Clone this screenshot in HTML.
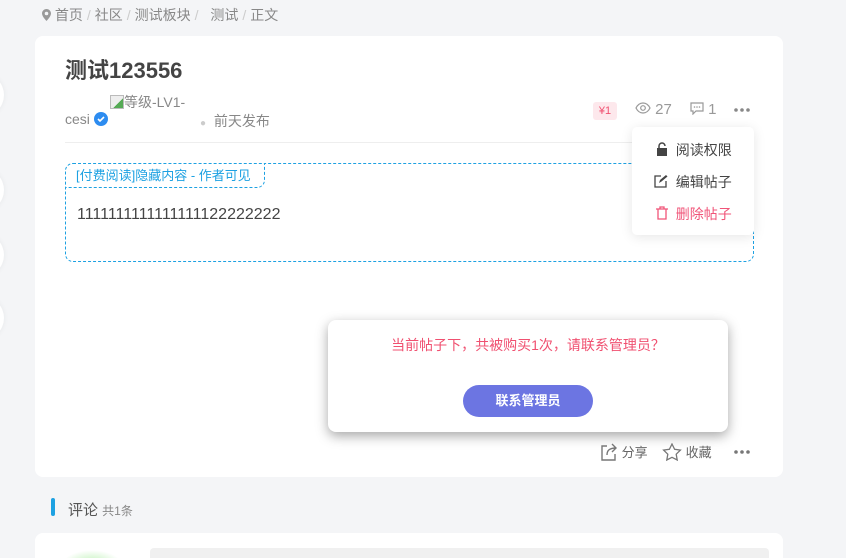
<!DOCTYPE html>
<html><head><meta charset="utf-8"><style>
*{margin:0;padding:0;box-sizing:border-box}
html,body{width:846px;height:558px;overflow:hidden}
body{background:#f4f5f7;font-family:"Liberation Sans","Noto Sans CJK SC",sans-serif;position:relative;color:#555}
.a{position:absolute}
.circ{position:absolute;left:-40px;width:44px;height:44px;border-radius:50%;background:#fff;box-shadow:0 0 6px rgba(0,0,0,.06)}
.card{position:absolute;left:35px;top:36px;width:748px;height:441px;background:#fff;border-radius:8px}
.sep{color:#ccc;margin:0 4px}
</style></head><body>
<div class="circ" style="top:73px"></div>
<div class="circ" style="top:168px"></div>
<div class="circ" style="top:233px"></div>
<div class="circ" style="top:296px"></div>
<div class="a" style="left:42px;top:5px;font-size:14px;color:#888;white-space:nowrap">
<svg width="9" height="12" viewBox="0 0 9 12" style="vertical-align:-1px"><path d="M4.5 0C2 0 0 2 0 4.5 0 7.5 4.5 12 4.5 12S9 7.5 9 4.5C9 2 7 0 4.5 0zm0 6.3a1.8 1.8 0 110-3.6 1.8 1.8 0 010 3.6z" fill="#999"/></svg> 首页<span class="sep">/</span>社区<span class="sep">/</span>测试板块<span class="sep">/</span>&nbsp; 测试<span class="sep">/</span>正文</div>
<div class="card"></div>
<div class="a" style="left:65px;top:53px;font-size:22px;font-weight:bold;color:#444">测试123556</div>
<div class="a" style="left:110px;top:92px;font-size:14px;color:#888"><span style="display:inline-block;width:14px;height:14px;border:1px solid #bbb;vertical-align:-2px;background:linear-gradient(135deg,#eee 60%,#5a5 60%)"></span>等级-LV1-</div>
<div class="a" style="left:65px;top:111px;font-size:14px;color:#888">cesi <svg width="14" height="14" viewBox="0 0 14 14" style="vertical-align:-2px"><circle cx="7" cy="7" r="7" fill="#2d8cf0"/><path d="M4 7l2 2 4-4" stroke="#fff" stroke-width="1.6" fill="none"/></svg></div>
<div class="a" style="left:200px;top:111px;font-size:14px;color:#888"><span style="color:#ccc;font-size:10px">●</span>&nbsp;&nbsp;前天发布</div>
<div class="a" style="left:593px;top:102px;width:24px;height:18px;background:#fde8ec;border-radius:3px;color:#f05070;font-size:11px;text-align:center;line-height:18px">¥1</div>
<div class="a" style="left:635px;top:101px;font-size:15px;color:#999;white-space:nowrap"><svg width="16" height="12" viewBox="0 0 16 12" style="vertical-align:0"><path d="M1 6C3 2 6 1 8 1s5 1 7 5c-2 4-5 5-7 5S3 10 1 6z" stroke="#999" fill="none" stroke-width="1.2"/><circle cx="8" cy="6" r="2.3" stroke="#999" fill="none" stroke-width="1.2"/></svg> 27</div>
<div class="a" style="left:690px;top:101px;font-size:15px;color:#999;white-space:nowrap"><svg width="14" height="13" viewBox="0 0 14 13" style="vertical-align:-1px"><path d="M1 1h12v8H6l-3 3V9H1z" stroke="#999" fill="none" stroke-width="1.2"/><circle cx="4.5" cy="5" r=".8" fill="#999"/><circle cx="7" cy="5" r=".8" fill="#999"/><circle cx="9.5" cy="5" r=".8" fill="#999"/></svg> 1</div>
<svg class="a" style="left:734px;top:108px" width="16" height="4"><circle cx="2" cy="2" r="1.8" fill="#888"/><circle cx="8" cy="2" r="1.8" fill="#888"/><circle cx="14" cy="2" r="1.8" fill="#888"/></svg>
<div class="a" style="left:65px;top:142px;width:568px;height:1px;background:#eee"></div>
<div class="a" style="left:65px;top:163px;width:689px;height:99px;border:1px dashed #1da1e2;border-radius:8px"></div>
<div class="a" style="left:65px;top:163px;width:200px;height:25px;border:1px dashed #1da1e2;border-radius:8px 0 8px 0;background:#fff;color:#1da1e2;font-size:13px;line-height:23px;padding-left:10px">[付费阅读]隐藏内容 - 作者可见</div>
<div class="a" style="left:77px;top:206px;font-size:16px;color:#444">1111111111111111122222222</div>
<div class="a" style="left:632px;top:127px;width:122px;height:108px;background:#fff;border-radius:5px;box-shadow:0 2px 12px rgba(0,0,0,.1);font-size:14px">
<div class="a" style="left:24px;top:13px;color:#444"><svg width="12" height="14" viewBox="0 0 12 14" style="vertical-align:-1px"><rect x="1" y="6" width="10" height="8" fill="#444"/><path d="M3 6V4a3 3 0 016 0" stroke="#444" fill="none" stroke-width="1.5"/></svg>&nbsp; 阅读权限</div>
<div class="a" style="left:22px;top:45px;color:#444"><svg width="14" height="14" viewBox="0 0 14 14" style="vertical-align:-1px"><path d="M7 2H1v11h11V7" stroke="#444" fill="none" stroke-width="1.3"/><path d="M5 9l1-3 6-5 1.5 1.5-6 5z" fill="#444"/></svg>&nbsp; 编辑帖子</div>
<div class="a" style="left:24px;top:77px;color:#f05478"><svg width="12" height="14" viewBox="0 0 12 14" style="vertical-align:-1px"><path d="M0 3h12M4 3V1h4v2M2 3v10h8V3" stroke="#f05478" fill="none" stroke-width="1.3"/></svg>&nbsp; 删除帖子</div>
</div>
<div class="a" style="left:328px;top:320px;width:400px;height:112px;background:#fff;border-radius:8px;box-shadow:0 4px 12px rgba(0,0,0,.35)">
<div class="a" style="left:0;top:15px;width:400px;text-align:center;color:#f05070;font-size:14px">当前帖子下，共被购买1次，请联系管理员？</div>
<div class="a" style="left:135px;top:65px;width:130px;height:32px;background:#6c75e2;border-radius:16px;color:#fff;font-size:13px;font-weight:bold;text-align:center;line-height:32px">联系管理员</div>
</div>
<div class="a" style="left:600px;top:442px;font-size:13px;color:#666;white-space:nowrap"><svg width="18" height="18" viewBox="0 0 18 18" style="vertical-align:-4px"><path d="M7 3H2v14h13v-6" stroke="#777" fill="none" stroke-width="1.4"/><path d="M7 12c0-5 3-7 9-7M12 1l4 4-4 4" stroke="#777" fill="none" stroke-width="1.4"/></svg> 分享</div>
<div class="a" style="left:662px;top:442px;font-size:13px;color:#666;white-space:nowrap"><svg width="20" height="18" viewBox="0 0 20 18" style="vertical-align:-4px"><path d="M10 1l2.6 5.3 5.8.8-4.2 4.1 1 5.8L10 14.3 4.8 17l1-5.8L1.6 7.1l5.8-.8z" stroke="#777" fill="none" stroke-width="1.3"/></svg> 收藏</div>
<svg class="a" style="left:734px;top:450px" width="16" height="4"><circle cx="2" cy="2" r="1.8" fill="#777"/><circle cx="8" cy="2" r="1.8" fill="#777"/><circle cx="14" cy="2" r="1.8" fill="#777"/></svg>
<div class="a" style="left:51px;top:498px;width:4px;height:18px;background:#1da1e2;border-radius:2px"></div>
<div class="a" style="left:68px;top:499px;font-size:15px;color:#555">评论 <span style="font-size:12px;color:#888">共1条</span></div>
<div class="a" style="left:35px;top:533px;width:748px;height:40px;background:#fff;border-radius:8px"></div>
<div class="a" style="left:150px;top:548px;width:619px;height:20px;background:#f0f0f0;border-radius:4px"></div>
<div class="a" style="left:62px;top:550px;width:60px;height:30px;border-radius:50%;background:radial-gradient(#b8f0b0,#fff 70%)"></div>
</body></html>
